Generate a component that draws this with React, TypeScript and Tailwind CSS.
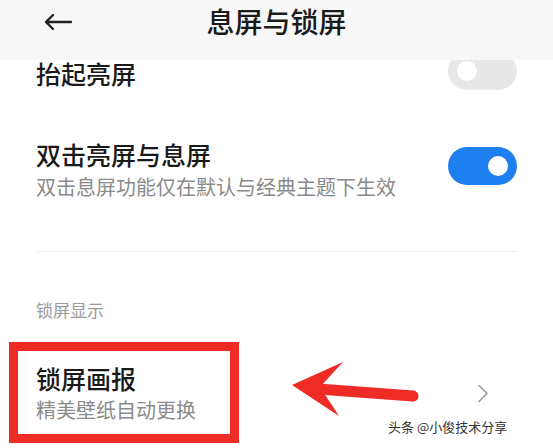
import React from "react";

const font = { fontFamily: '"Noto Sans CJK SC", "Noto Sans", sans-serif' };

function Toggle({ on, className = "" }: { on: boolean; className?: string }) {
  return (
    <div
      className={`flex h-[38px] w-[69px] shrink-0 items-center rounded-full px-[9px] ${
        on ? "justify-end bg-[#1e80f0]" : "justify-start bg-[#e8e8e8]"
      } ${className}`}
    >
      <div className="h-[20px] w-[20px] rounded-full bg-white" />
    </div>
  );
}

export default function App() {
  return (
    <div className="relative h-[448px] w-[553px] overflow-hidden bg-white text-[#1a1a1a]" style={font}>
      <div className="relative z-10 h-[60px] bg-[#f7f7f7]">
        <div className="relative flex h-[42px] items-center justify-center">
          <svg className="absolute left-[43px] top-[13px]" width="30" height="18" viewBox="0 0 30 18">
            <path d="M28 9H3M10 2L3 9l7 7" fill="none" stroke="#222" strokeWidth="2.4" strokeLinecap="round" strokeLinejoin="round" />
          </svg>
          <div className="text-[28px] font-medium leading-[42px]">息屏与锁屏</div>
        </div>
      </div>

      <div className="px-[36px]">
        <div className="flex h-[26px] items-center justify-between">
          <div className="text-[25px] font-medium leading-[26px]">抬起亮屏</div>
          <Toggle on={false} className="mb-[4px]" />
        </div>

        <div className="mt-[55px] flex items-center justify-between">
          <div className="flex flex-col">
            <div className="text-[25px] font-medium leading-[26px]">双击亮屏与息屏</div>
            <div className="mt-[7px] text-[20px] leading-[26px] text-[#8a8a8a]">双击息屏功能仅在默认与经典主题下生效</div>
          </div>
          <Toggle on className="mb-[10px]" />
        </div>

        <div className="mt-[51px] h-px bg-[#f0f0f0]" />

        <div className="mt-[48px] text-[17px] leading-[20px] text-[#9a9a9a]">锁屏显示</div>

        <div className="mt-[45px] flex items-center justify-between">
          <div className="flex flex-col">
            <div className="text-[25px] font-medium leading-[26px]">锁屏画报</div>
            <div className="mt-[6px] text-[20px] leading-[26px] text-[#8a8a8a]">精美壁纸自动更换</div>
          </div>
          <svg className="mr-[28px] mb-[2px]" width="12" height="19" viewBox="0 0 12 19">
            <path d="M2 1.5l8 8-8 8" fill="none" stroke="#9a9a9a" strokeWidth="1.6" strokeLinecap="round" strokeLinejoin="round" />
          </svg>
        </div>
      </div>

      <div className="absolute left-[9px] top-[342px] h-[101px] w-[230px] border-[9px] border-[#ef2b26]" />

      <svg className="absolute left-0 top-0" width="553" height="448" viewBox="0 0 553 448">
        <line x1="318" y1="389" x2="413" y2="396" stroke="#ef2b26" strokeWidth="11" strokeLinecap="round" />
        <path d="M292 385 L343 362 L320 387 L339 416 Z" fill="#ef2b26" />
      </svg>

      <div
        className="absolute left-[388px] top-[419px] text-[13px] leading-[16px] text-[#333]"
        style={{ textShadow: "0 0 2px #fff, 0 0 2px #fff" }}
      >
        头条 @小俊技术分享
      </div>
    </div>
  );
}
